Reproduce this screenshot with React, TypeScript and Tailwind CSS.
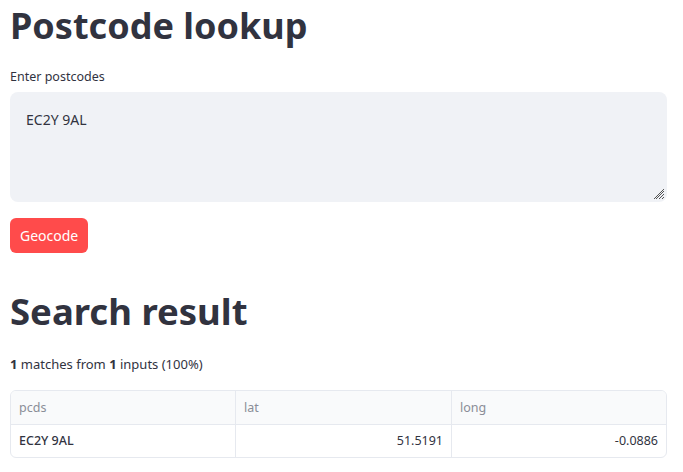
const rows = [{ pcds: "EC2Y 9AL", lat: "51.5191", long: "-0.0886" }];

export default function App() {
  return (
    <div className="min-h-screen bg-white pl-[10px] pr-[16px] text-[#31333f]" style={{ fontFamily: '"Noto Sans", sans-serif' }}>
      <h1 className="pt-[4px] text-[36px] font-bold leading-[44px]">Postcode lookup</h1>

      <div className="mt-[21px] text-[12.5px] leading-[16px]">Enter postcodes</div>
      <div className="relative mt-[7px] h-[110px] rounded-[8px] bg-[#f0f2f6] px-[16px] pt-[17px] text-[14px]">
        EC2Y 9AL
        <svg className="absolute bottom-[2px] right-[2px]" width="12" height="12" viewBox="0 0 12 12">
          <path d="M11 3L3 11M11 6L6 11M11 9L9 11M11 1L1 11" stroke="#555" strokeWidth="1" />
        </svg>
      </div>

      <button className="mt-[16px] h-[35px] rounded-[6px] bg-[#ff4b4b] px-[10px] text-[14px] text-white">Geocode</button>

      <h2 className="mt-[36px] text-[36.5px] font-bold leading-[44px]">Search result</h2>

      <p className="mt-[22px] text-[13px] leading-[18px]">
        <span className="font-bold">1</span> matches from <span className="font-bold">1</span> inputs (100%)
      </p>

      <div className="mt-[17px] overflow-hidden rounded-[6px] border border-[#e6e9ef] text-[12.5px]">
        <div className="grid grid-cols-[225px_216px_1fr] bg-[#f9fafb] text-[#8a8d97]">
          <div className="h-[33px] border-r border-[#e6e9ef] px-[8px] leading-[33px]">pcds</div>
          <div className="h-[33px] border-r border-[#e6e9ef] px-[8px] leading-[33px]">lat</div>
          <div className="h-[33px] px-[8px] leading-[33px]">long</div>
        </div>
        {rows.map((r) => (
          <div key={r.pcds} className="grid grid-cols-[225px_216px_1fr] border-t border-[#e6e9ef]">
            <div className="h-[32px] border-r border-[#e6e9ef] px-[8px] font-medium leading-[32px]">{r.pcds}</div>
            <div className="h-[32px] border-r border-[#e6e9ef] px-[8px] text-right leading-[32px]">{r.lat}</div>
            <div className="h-[32px] px-[8px] text-right leading-[32px]">{r.long}</div>
          </div>
        ))}
      </div>
    </div>
  );
}
